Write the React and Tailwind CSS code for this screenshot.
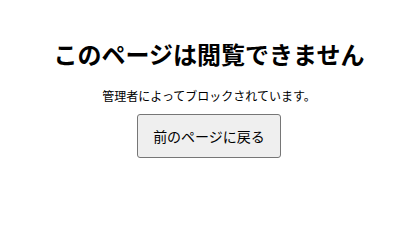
export default function App() {
  return (
    <div
      className="w-[418px] h-[230px] bg-white flex flex-col items-center text-black"
      style={{ fontFamily: '"Noto Sans CJK JP", "Noto Sans", sans-serif' }}
    >
      <h1 className="mt-[38px] text-[24px] leading-[32px] font-bold">
        このページは閲覧できません
      </h1>
      <p className="mt-[18px] text-[12px] leading-[16px]">
        管理者によってブロックされています。
      </p>
      <button className="mt-[10px] px-[15px] py-[11px] text-[14px] leading-[20px] bg-[#efefef] border border-[#767676] rounded-[3px]">
        前のページに戻る
      </button>
    </div>
  )
}
